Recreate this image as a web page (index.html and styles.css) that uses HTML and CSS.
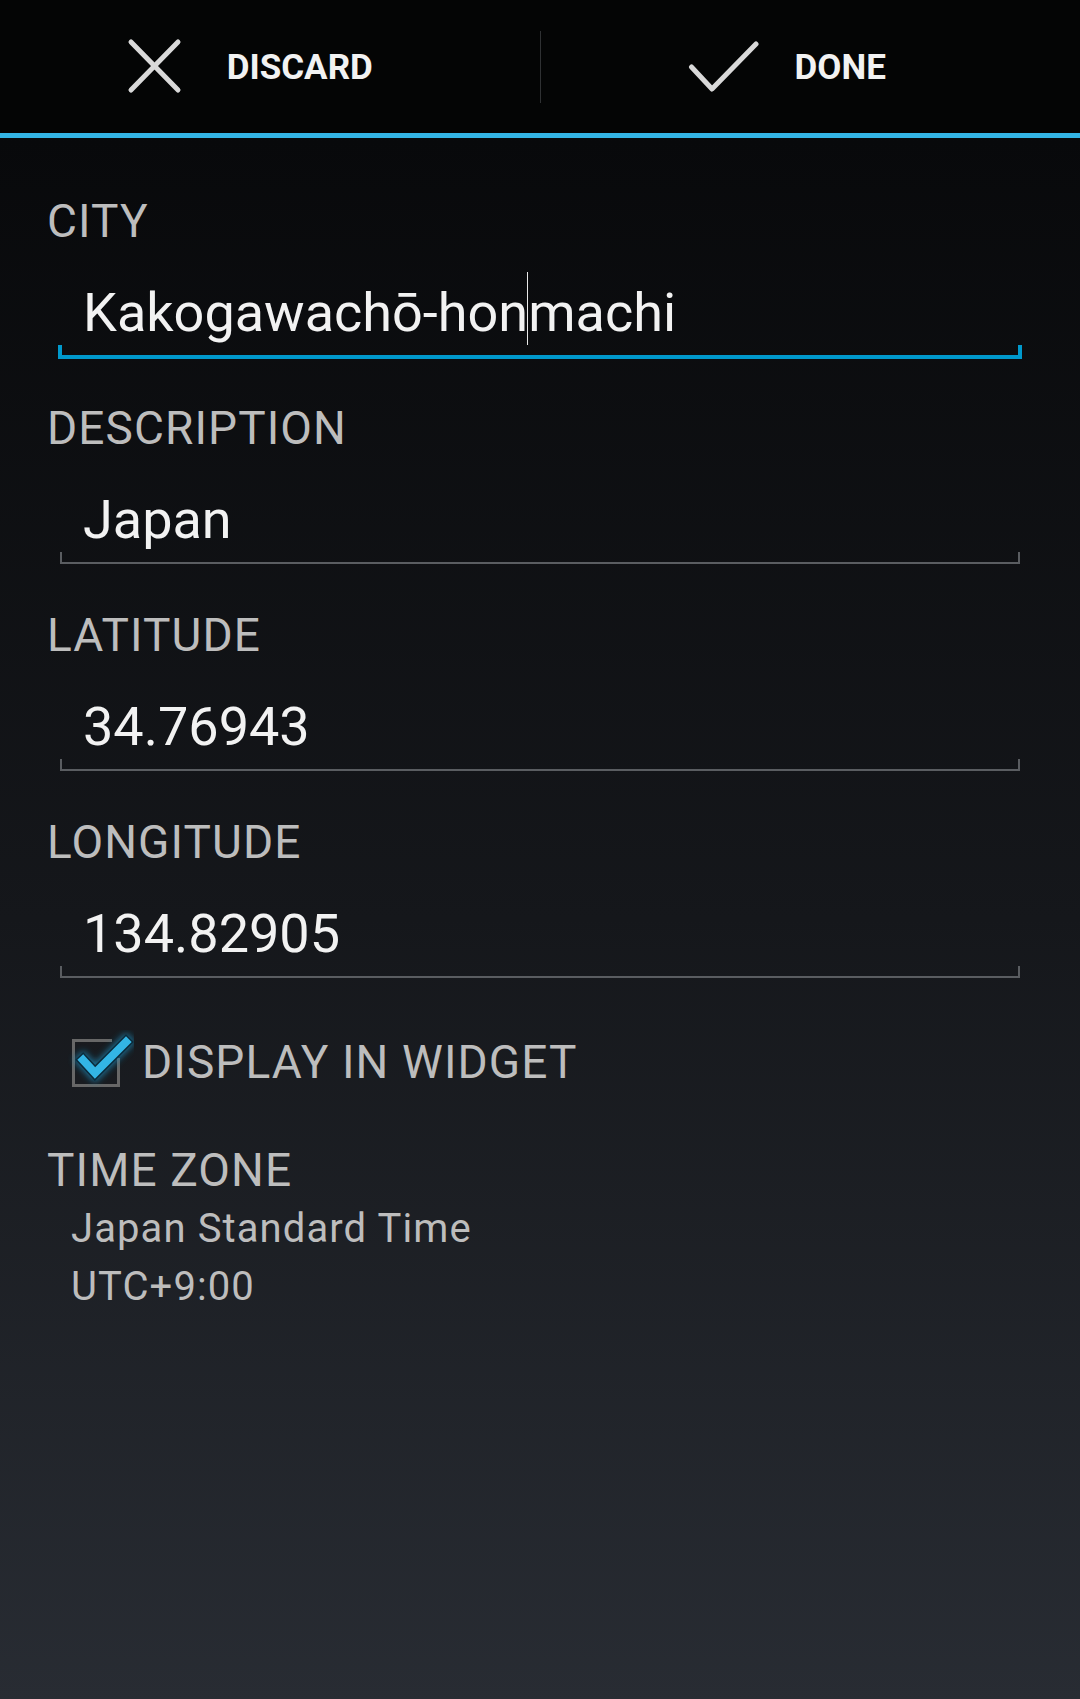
FILE: index.html
```html
<!DOCTYPE html>
<html lang="en">
<head>
<meta charset="utf-8">
<title>Edit city</title>
<link rel="stylesheet" href="styles.css">
</head>
<body>
<div class="screen">
  <header class="actionbar">
    <div class="action">
      <svg class="action-icon" viewBox="0 0 72 72" width="72" height="72">
        <path d="M12 11 L59 59 M59 11 L12 59" stroke="#d9d9d9" stroke-width="5" stroke-linecap="round" fill="none"/>
      </svg>
      <span class="action-text">DISCARD</span>
    </div>
    <div class="divider"></div>
    <div class="action">
      <svg class="action-icon" viewBox="0 0 72 72" width="72" height="72">
        <path d="M4.5 36 L25 58 L69 13" stroke="#d9d9d9" stroke-width="5" stroke-linecap="round" stroke-linejoin="round" fill="none"/>
      </svg>
      <span class="action-text">DONE</span>
    </div>
  </header>
  <main class="content">
    <div class="group">
      <div class="label">CITY</div>
      <div class="field">
        <div class="field-text">Kakogawachō-hon<span class="cursor"></span>machi</div>
        <div class="underline-box"><div class="underline focused"></div></div>
      </div>
    </div>
    <div class="group">
      <div class="label">DESCRIPTION</div>
      <div class="field">
        <div class="field-text">Japan</div>
        <div class="underline-box"><div class="underline"></div></div>
      </div>
    </div>
    <div class="group">
      <div class="label">LATITUDE</div>
      <div class="field">
        <div class="field-text">34.76943</div>
        <div class="underline-box"><div class="underline"></div></div>
      </div>
    </div>
    <div class="group">
      <div class="label">LONGITUDE</div>
      <div class="field">
        <div class="field-text">134.82905</div>
        <div class="underline-box"><div class="underline"></div></div>
      </div>
    </div>
    <div class="check-row">
      <svg class="checkbox" viewBox="0 0 70 64" width="70" height="64">
        <defs>
          <filter id="glow" x="-50%" y="-50%" width="200%" height="200%">
            <feGaussianBlur stdDeviation="3.5"/>
          </filter>
        </defs>
        <path d="M48 10.5 H9.5 V55.5 H54.5 V28" stroke="#676767" stroke-width="3" fill="none"/>
        <path d="M19 30 L31 43 L62 12" stroke="#1f8fc0" stroke-width="13" stroke-linejoin="miter" stroke-linecap="square" fill="none" filter="url(#glow)" opacity="0.8"/>
        <path d="M19 30 L31 43 L62 12" stroke="#0b2a3a" stroke-width="11" stroke-linejoin="miter" stroke-linecap="square" fill="none"/>
        <path d="M19 30 L31 43 L62 12" stroke="#33b5e5" stroke-width="8" stroke-linejoin="miter" stroke-linecap="square" fill="none"/>
      </svg>
      <span class="check-text">DISPLAY IN WIDGET</span>
    </div>
    <div class="label tz-label">TIME ZONE</div>
    <div class="tz-line">Japan Standard Time</div>
    <div class="tz-line">UTC+9:00</div>
  </main>
</div>
</body>
</html>
```

FILE: styles.css
```css
html, body {
  margin: 0;
  padding: 0;
}

body {
  width: 1080px;
  height: 1699px;
  overflow: hidden;
  font-family: Roboto, "Liberation Sans", sans-serif;
  background: #050606;
}

.screen {
  display: flex;
  flex-direction: column;
  height: 1699px;
}

.actionbar {
  height: 133px;
  flex: 0 0 133px;
  display: flex;
  align-items: center;
  background: #040505;
  border-bottom: 5px solid #33b5e5;
}

.action {
  flex: 1;
  display: flex;
  align-items: center;
  justify-content: center;
  padding-right: 48px;
  height: 100%;
}

.action-icon {
  display: block;
  margin-right: 36px;
}

.action-text {
  color: #f2f2f2;
  font-weight: 700;
  font-size: 35px;
  line-height: 40px;
  padding-top: 3px;
}

.divider {
  width: 1px;
  height: 72px;
  background: #2f3133;
  flex: 0 0 1px;
}

.content {
  flex: 1;
  padding: 56px 58px 0 47px;
  background: linear-gradient(to bottom, #08090b 0%, #15171b 50%, #282c33 100%);
}

.label {
  color: #bdbdbd;
  font-size: 46px;
  letter-spacing: 1.1px;
  line-height: 54px;
  height: 54px;
  white-space: nowrap;
}

.field {
  margin-left: 11px;
  margin-top: 33px;
  margin-bottom: 42px;
}

.field-text {
  color: #f2f2f2;
  font-size: 54px;
  line-height: 64px;
  height: 64px;
  padding-left: 25px;
  white-space: nowrap;
}

.cursor {
  position: relative;
  display: inline-block;
  width: 0;
  height: 0;
}

.cursor::after {
  content: "";
  position: absolute;
  left: -1px;
  bottom: -14px;
  width: 1px;
  height: 73px;
  background: #e8e8e8;
}

.underline-box {
  height: 14px;
}

.underline {
  height: 10px;
  margin: 0 2px;
  border: 2px solid #5a5d61;
  border-top: 0;
}

.underline.focused {
  margin: 0;
  border-width: 0 4px 4px 4px;
  border-color: #0099cc;
}

.check-row {
  display: flex;
  align-items: center;
  height: 64px;
  margin-top: 50px;
  margin-left: 17px;
}

.checkbox {
  display: block;
  margin-right: 8px;
}

.check-text {
  color: #bdbdbd;
  font-size: 46px;
  letter-spacing: 1.1px;
  line-height: 54px;
  white-space: nowrap;
}

.tz-label {
  margin-top: 49px;
}

.tz-line {
  color: #bdbdbd;
  font-size: 40px;
  letter-spacing: 1.1px;
  line-height: 58px;
  height: 58px;
  padding-left: 24px;
  white-space: nowrap;
}

.tz-label + .tz-line {
  margin-top: 3px;
}
```
